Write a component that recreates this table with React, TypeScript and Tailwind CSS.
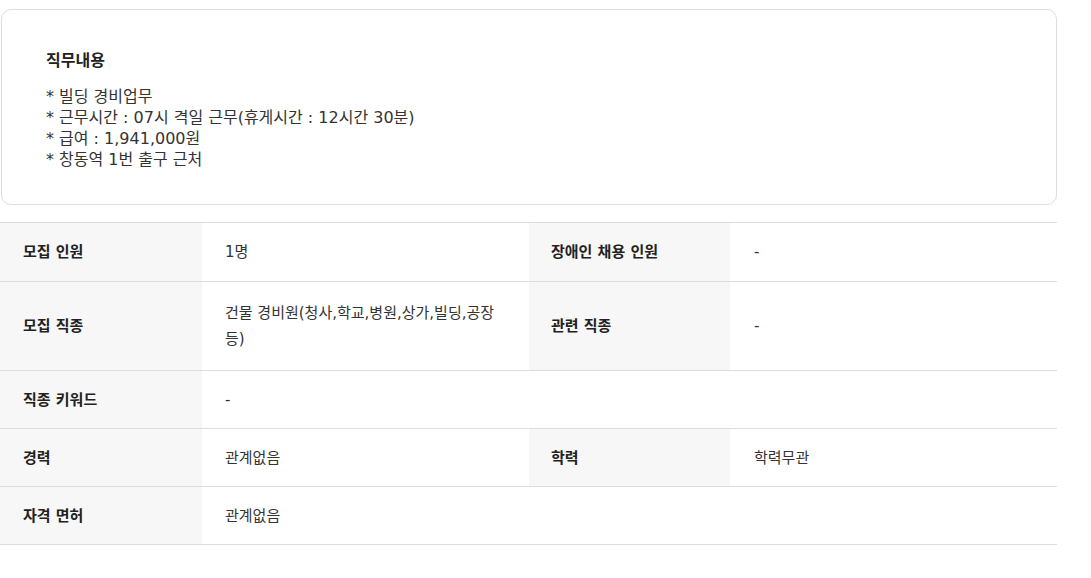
import React from "react";

type Row = {
  label: string;
  value: string;
  label2?: string;
  value2?: string;
  pad: string;
};

const rows: Row[] = [
  { label: "모집 인원", value: "1명", label2: "장애인 채용 인원", value2: "-", pad: "py-[16px]" },
  {
    label: "모집 직종",
    value: "건물 경비원(청사,학교,병원,상가,빌딩,공장 등)",
    label2: "관련 직종",
    value2: "-",
    pad: "py-[18px]",
  },
  { label: "직종 키워드", value: "-", pad: "py-[15.5px]" },
  { label: "경력", value: "관계없음", label2: "학력", value2: "학력무관", pad: "py-[15.5px]" },
  { label: "자격 면허", value: "관계없음", pad: "py-[15.5px]" },
];

const duties = [
  "* 빌딩 경비업무",
  "* 근무시간 : 07시 격일 근무(휴게시간 : 12시간 30분)",
  "* 급여 : 1,941,000원",
  "* 창동역 1번 출구 근처",
];

const App = () => {
  return (
    <div className="w-[1057px] bg-white pt-[9px] font-['DejaVu_Sans','Noto_Sans_CJK_KR',sans-serif] text-[#333]">
      <div className="ml-[1px] rounded-[10px] border border-[#dedede] pl-[44px] pt-[39px] pb-[34px]">
        <h3 className="text-[16px] font-bold leading-[24px] text-[#222]">직무내용</h3>
        <div className="mt-[13px] text-[16px] leading-[21px] text-[#333]">
          {duties.map((d) => (
            <p key={d}>{d}</p>
          ))}
        </div>
      </div>

      <div className="mt-[17px] border-t border-[#dddddd]">
        {rows.map((r) => (
          <div
            key={r.label}
            className="grid grid-cols-[202px_327px_201px_1fr] border-b border-[#dddddd] text-[15px] leading-[26px]"
          >
            <div className="flex items-center bg-[#f7f7f7] px-[23px] font-bold text-[#222]">
              {r.label}
            </div>
            {r.label2 ? (
              <>
                <div className={`flex items-center px-[23px] ${r.pad}`}>{r.value}</div>
                <div className="flex items-center bg-[#f7f7f7] px-[22px] font-bold text-[#222]">
                  {r.label2}
                </div>
                <div className="flex items-center px-[24px]">{r.value2}</div>
              </>
            ) : (
              <div className={`col-span-3 flex items-center px-[23px] ${r.pad}`}>{r.value}</div>
            )}
          </div>
        ))}
      </div>
    </div>
  );
};

export default App;
